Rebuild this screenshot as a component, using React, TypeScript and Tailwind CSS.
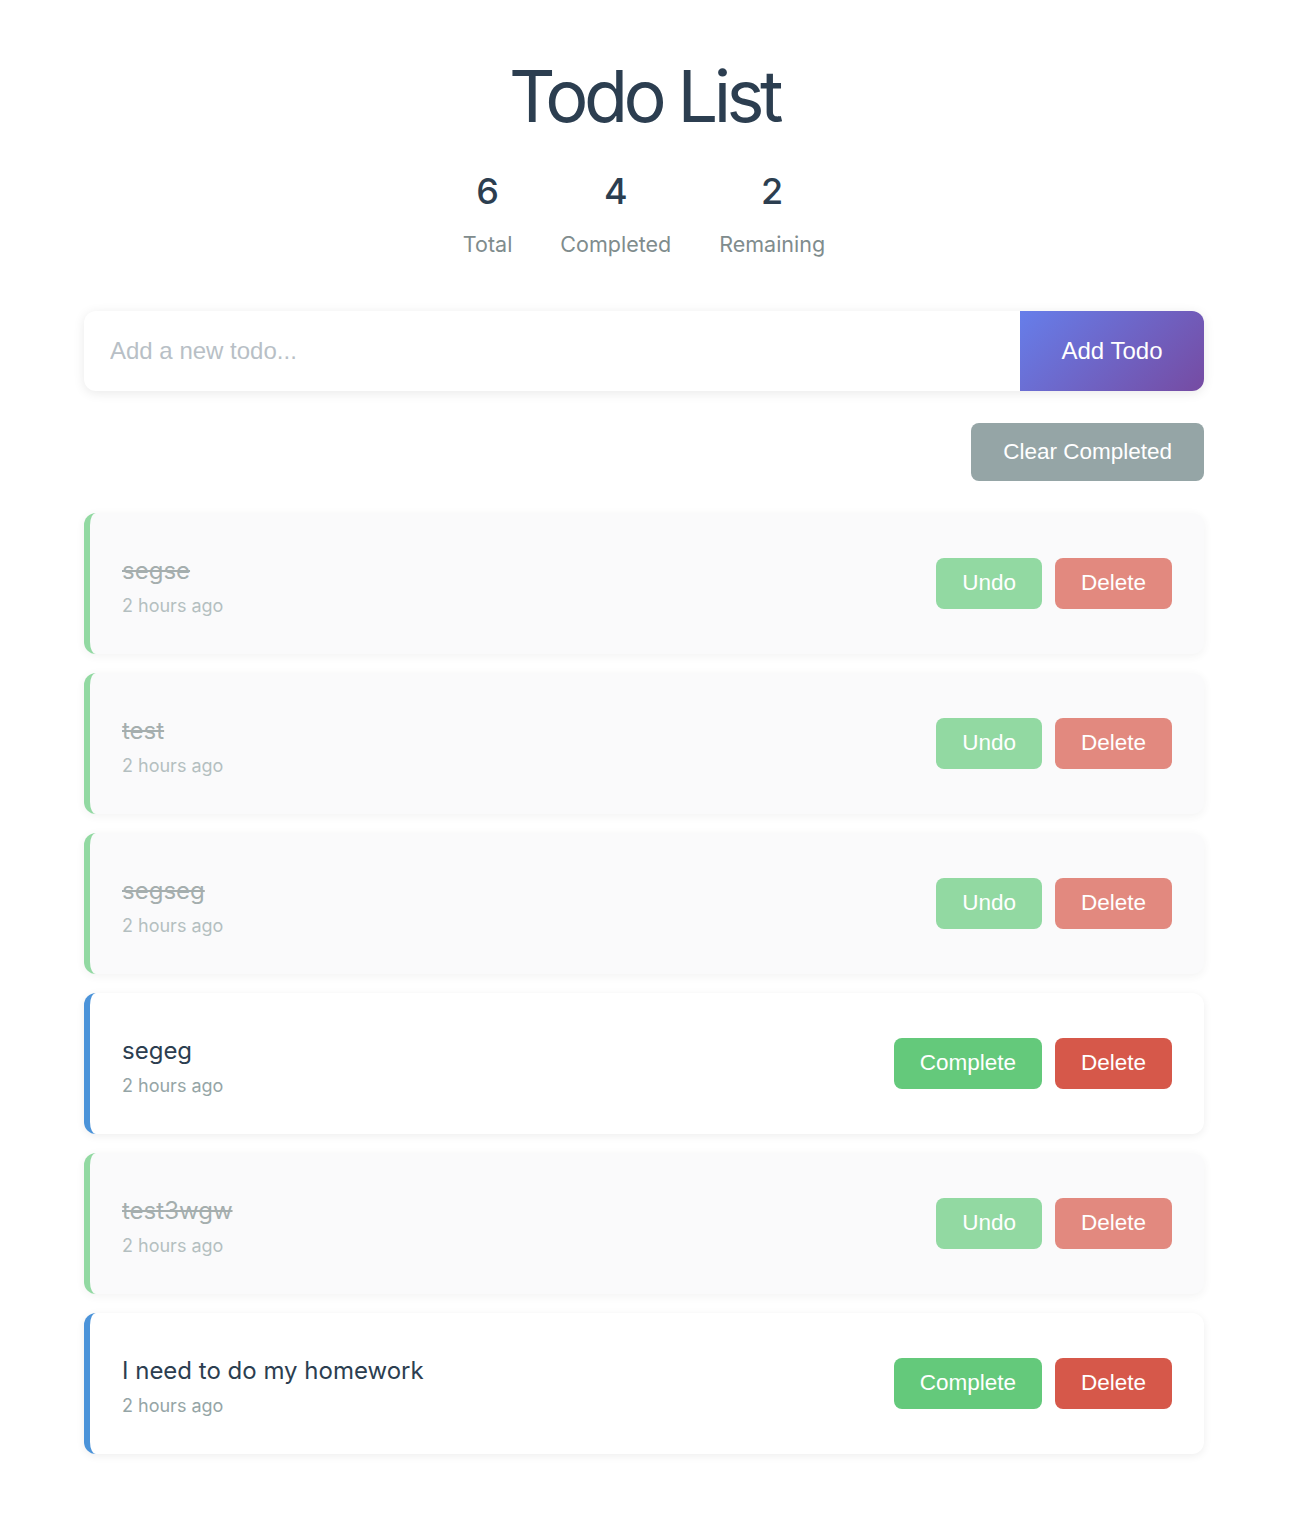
import React, { useState } from 'react';

interface Todo {
  id: number;
  text: string;
  completed: boolean;
  time: string;
}

const initialTodos: Todo[] = [
  { id: 1, text: 'segse', completed: true, time: '2 hours ago' },
  { id: 2, text: 'test', completed: true, time: '2 hours ago' },
  { id: 3, text: 'segseg', completed: true, time: '2 hours ago' },
  { id: 4, text: 'segeg', completed: false, time: '2 hours ago' },
  { id: 5, text: 'test3wgw', completed: true, time: '2 hours ago' },
  { id: 6, text: 'I need to do my homework', completed: false, time: '2 hours ago' },
];

function TodoItem({ todo, onToggle, onDelete }: { todo: Todo; onToggle: () => void; onDelete: () => void }) {
  return (
    <div
      className={`flex items-center justify-between h-[141px] pl-[32px] pr-[32px] rounded-xl border-l-[6px] shadow-[0_2px_8px_rgba(0,0,0,0.07)] ${
        todo.completed ? 'bg-[#f8f9fa] border-[#64c97b] opacity-70' : 'bg-white border-[#4b93d9]'
      }`}
    >
      <div className="mt-[7px] flex flex-col">
        <span
          className={`text-[24px] leading-[24px] ${
            todo.completed ? 'line-through text-[#7f8c8d]' : 'text-[#2c3e50]'
          }`}
        >
          {todo.text}
        </span>
        <span className="mt-[14px] text-[18px] leading-[18px] text-[#95a5a6]">{todo.time}</span>
      </div>
      <div className="flex items-center gap-[13px] font-['Liberation_Sans',Arial,sans-serif]">
        <button
          onClick={onToggle}
          className="h-[51px] px-[26px] rounded-lg bg-[#64c97b] text-white text-[22.5px]"
        >
          {todo.completed ? 'Undo' : 'Complete'}
        </button>
        <button
          onClick={onDelete}
          className="h-[51px] px-[26px] rounded-lg bg-[#d6584a] text-white text-[22.5px]"
        >
          Delete
        </button>
      </div>
    </div>
  );
}

export default function App() {
  const [todos, setTodos] = useState<Todo[]>(initialTodos);
  const [text, setText] = useState('');

  const total = todos.length;
  const completed = todos.filter((t) => t.completed).length;
  const remaining = total - completed;

  const addTodo = () => {
    if (!text.trim()) return;
    setTodos([...todos, { id: Date.now(), text: text.trim(), completed: false, time: 'just now' }]);
    setText('');
  };

  return (
    <div className="min-h-screen bg-white font-['Inter',sans-serif] pb-[64px]">
      <div className="w-[1122px] mx-auto pr-[2px] pt-[60px]">
        <h1 className="text-center text-[72px] leading-none tracking-[-4.6px] text-[#2c3e50] font-normal">
          Todo List
        </h1>

        {/* Stats */}
        <div className="mt-[41px] flex justify-center gap-12">
          {[
            { n: total, label: 'Total' },
            { n: completed, label: 'Completed' },
            { n: remaining, label: 'Remaining' },
          ].map((s) => (
            <div key={s.label} className="flex flex-col items-center">
              <span className="text-[36px] leading-none font-medium text-[#2c3e50]">{s.n}</span>
              <span className="mt-[25px] text-[21.5px] leading-none text-[#7f8c8d]">{s.label}</span>
            </div>
          ))}
        </div>

        {/* Input */}
        <div className="mt-[55px] flex h-[80px] rounded-xl overflow-hidden bg-white shadow-[0_2px_12px_rgba(0,0,0,0.09)]">
          <input
            value={text}
            onChange={(e) => setText(e.target.value)}
            onKeyDown={(e) => e.key === 'Enter' && addTodo()}
            placeholder="Add a new todo..."
            className="flex-1 px-[26px] text-[24px] font-['Liberation_Sans',Arial,sans-serif] text-[#2c3e50] placeholder:text-[#b8bfc6] outline-none"
          />
          <button
            onClick={addTodo}
            className="w-[184px] text-white text-[24px] font-['Liberation_Sans',Arial,sans-serif] bg-[linear-gradient(135deg,#667eea_0%,#764ba2_100%)]"
          >
            Add Todo
          </button>
        </div>

        {/* Clear completed */}
        <div className="mt-[32px] flex justify-end">
          <button
            onClick={() => setTodos(todos.filter((t) => !t.completed))}
            className="h-[58px] px-[32px] rounded-lg bg-[#95a5a6] text-white text-[22.5px] font-['Liberation_Sans',Arial,sans-serif]"
          >
            Clear Completed
          </button>
        </div>

        {/* List */}
        <div className="mt-[32px] flex flex-col gap-[19px]">
          {todos.map((todo) => (
            <TodoItem
              key={todo.id}
              todo={todo}
              onToggle={() =>
                setTodos(todos.map((t) => (t.id === todo.id ? { ...t, completed: !t.completed } : t)))
              }
              onDelete={() => setTodos(todos.filter((t) => t.id !== todo.id))}
            />
          ))}
        </div>
      </div>
    </div>
  );
}
